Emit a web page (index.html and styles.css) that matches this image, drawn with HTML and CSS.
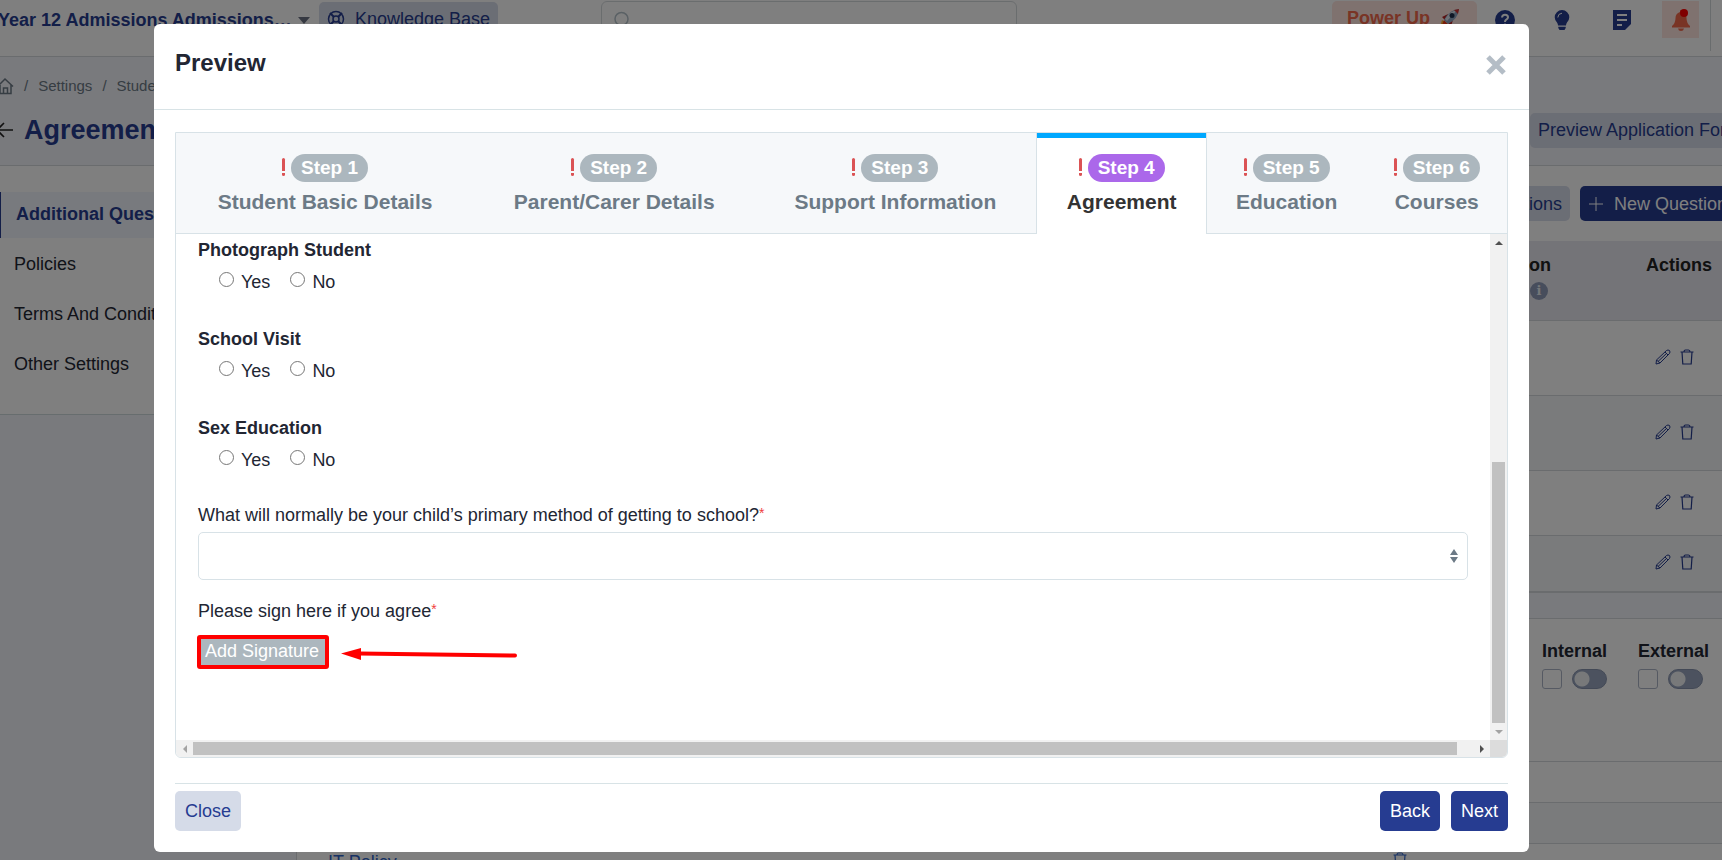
FILE: index.html
```html
<!DOCTYPE html>
<html lang="en">
<head>
<meta charset="utf-8">
<title>Preview</title>
<link rel="stylesheet" href="styles.css">
</head>
<body>
<svg class="defs" aria-hidden="true">
  <symbol id="pencil" viewBox="0 0 16 16"><path d="M1 15 L1.500 11 L11.500 1.500 Q13 0.500 14.500 1.500 Q15.500 3 14.500 4.500 L5 14 Z M10 3 L13 6 M1.500 11 L5 14 M3 12.500 L12 4" fill="none" stroke="currentColor" stroke-width="1"/></symbol>
  <symbol id="trash" viewBox="0 0 14 16"><path d="M0.500 3 H13.500 M4 3 Q4 1 5.500 1 H8.500 Q10 1 10 3 M2 3 L2.800 15 H11.200 L12 3" fill="none" stroke="currentColor" stroke-width="1.200"/></symbol>
</svg>

<div class="page">
  <header class="topbar">
    <button class="school">Year 12 Admissions Admissions… <span class="caret"></span></button>
    <button class="kb">
      <svg width="18" height="18" viewBox="0 0 18 18" fill="none" stroke="currentColor" stroke-width="1.500"><circle cx="9" cy="9" r="7.500"/><circle cx="9" cy="9" r="3"/><path d="M3 3l4 4M15 3l-4 4M3 15l4-4M15 15l-4-4" stroke-width="2"/></svg>
      Knowledge Base
    </button>
    <div class="search">
      <svg width="16" height="16" viewBox="0 0 16 16" fill="none" stroke="currentColor" stroke-width="1.500"><circle cx="7.500" cy="8" r="6.500"/><path d="M12 13l3 3"/></svg>
      <input type="search" aria-label="Search">
    </div>
    <div class="tools">
      <button class="power">Power Up
        <svg width="20" height="20" viewBox="0 0 20 20"><path d="M0 19L2 12L8 16Z" fill="#ffb02e"/><path d="M2 17L4 12L8 16Z" fill="#f03a17"/><path d="M8 6L2 9L5 12ZM13 12L11 18L8 15Z" fill="#b52222"/><path d="M4 12Q9 2 19 1Q18 11 8 16Z" fill="#8fa6c2"/><path d="M5 11Q10 3 17 2L7 13Z" fill="#dde5ef"/><path d="M14 2L19 1L18 6Z" fill="#d03030"/><circle cx="12" cy="7.500" r="2.500" fill="#1c2f4d"/></svg>
      </button>
      <button class="tool" aria-label="Help"><svg width="20" height="20" viewBox="0 0 20 20"><circle cx="10" cy="10" r="10" fill="currentColor"/><path d="M7 7.500Q7.300 4.800 10 4.800Q13 4.800 13 7.300Q13 8.800 11.300 9.700Q10 10.400 10 12" fill="none" stroke="#fff" stroke-width="2"/><circle cx="10" cy="14.800" r="1.300" fill="#fff"/></svg></button>
      <button class="tool" aria-label="Ideas"><svg width="16" height="20" viewBox="0 0 16 20"><path d="M8 0A7.300 7.300 0 0 1 15.300 7.300Q15.300 10 13 12.500Q12 14 12 15.500H4Q4 14 3 12.500Q.7 10 .7 7.300A7.300 7.300 0 0 1 8 0ZM4.300 16.700H11.700V18L10.500 20H5.500L4.300 18Z" fill="currentColor"/><path d="M3.800 7.500Q4 3.500 8 3.200" fill="none" stroke="#fff" stroke-width="1"/></svg></button>
      <button class="tool notes" aria-label="Notes"><svg width="18" height="20" viewBox="0 0 18 20"><path d="M0 0H18V14L12 20H0Z" fill="currentColor"/><path d="M4 5H14M4 10H14M4 15H9" stroke="#fff" stroke-width="2"/></svg></button>
      <button class="bell" aria-label="Notifications"><svg width="20" height="22" viewBox="0 0 20 22"><path d="M9 1.500Q10 .5 11 1.500V3Q15.500 4.500 15.500 9Q15.500 14 19 17V18.500H1V17Q4.500 14 4.500 9Q4.500 4.500 9 3ZM7 19.500H13Q12.500 22 10 22Q7.500 22 7 19.500Z" fill="#f2684b"/><circle cx="13" cy="4" r="4" fill="#f00"/></svg></button>
    </div>
  </header>

  <div class="subhead">
    <nav class="crumbs" aria-label="Breadcrumb">
      <svg width="16" height="18" viewBox="0 0 16 18" fill="none" stroke="currentColor" stroke-width="1.500"><path d="M0 9L7 2L15 9.500M2 8V16.500H13V8M5.500 16V11H9.500V16"/></svg>
      <span>/</span><a href="#">Settings</a><span>/</span><a href="#">Student</a>
    </nav>
    <div class="titlebar">
      <svg width="18" height="16" viewBox="0 0 18 16" fill="none" stroke="#222" stroke-width="1.600"><path d="M17 8H1M8 1L1 8L8 15"/></svg>
      <h1>Agreement</h1>
      <button class="soft preview">Preview Application Form</button>
    </div>
  </div>

  <div class="columns">
    <div class="side">
      <nav class="sidebar">
        <a class="current" href="#">Additional Questions</a>
        <a href="#">Policies</a>
        <a href="#">Terms And Conditions</a>
        <a href="#">Other Settings</a>
      </nav>
    </div>
    <main class="main">
      <div class="actions"><button class="soft">Questions</button><button class="new"><svg width="14" height="14" viewBox="0 0 14 14" stroke="currentColor"><path d="M7 0V14M0 7H14"/></svg>New Question</button></div>
      <table class="grid">
        <thead><tr><th class="cond">Condition<br><span class="info">i</span></th><th>Actions</th></tr></thead>
        <tbody>
          <tr class="tall"><td></td><td><div class="icons"><svg class="ic"><use href="#pencil"/></svg><svg class="ic bin"><use href="#trash"/></svg></div></td></tr>
          <tr class="tall"><td></td><td><div class="icons"><svg class="ic"><use href="#pencil"/></svg><svg class="ic bin"><use href="#trash"/></svg></div></td></tr>
          <tr class="mid"><td></td><td><div class="icons"><svg class="ic"><use href="#pencil"/></svg><svg class="ic bin"><use href="#trash"/></svg></div></td></tr>
          <tr class="low"><td></td><td><div class="icons"><svg class="ic"><use href="#pencil"/></svg><svg class="ic bin"><use href="#trash"/></svg></div></td></tr>
        </tbody>
      </table>
      <div class="gap"></div>
      <div class="access">
        <div class="group"><b>Internal</b><div class="pair"><input type="checkbox" aria-label="Internal required"><input class="switch" type="checkbox" aria-label="Internal enabled"></div></div>
        <div class="group"><b>External</b><div class="pair"><input type="checkbox" aria-label="External required"><input class="switch" type="checkbox" aria-label="External enabled"></div></div>
      </div>
      <div class="strip"></div>
      <div class="strip shade"></div>
      <div class="policy"><a href="#">IT Policy</a><svg class="ic bin"><use href="#trash"/></svg></div>
    </main>
  </div>
</div>

<div class="overlay">
  <section class="modal" role="dialog" aria-label="Preview">
    <div class="modal-head">
      <h2>Preview</h2>
      <button class="x" aria-label="Dismiss"><svg width="20" height="20" viewBox="0 0 20 20" stroke="currentColor" stroke-width="5"><path d="M2 2L18 18M18 2L2 18"/></svg></button>
    </div>
    <div class="modal-body">
      <div class="wizard">
        <div class="tabs" role="tablist">
          <button class="tab t1" role="tab"><span class="step"><i></i><span class="badge">Step 1</span></span>Student Basic Details</button>
          <button class="tab t2" role="tab"><span class="step"><i></i><span class="badge">Step 2</span></span>Parent/Carer Details</button>
          <button class="tab t3" role="tab"><span class="step"><i></i><span class="badge">Step 3</span></span>Support Information</button>
          <button class="tab t4 active" role="tab" aria-selected="true"><span class="step"><i></i><span class="badge">Step 4</span></span>Agreement</button>
          <button class="tab t5" role="tab"><span class="step"><i></i><span class="badge">Step 5</span></span>Education</button>
          <button class="tab t6" role="tab"><span class="step"><i></i><span class="badge">Step 6</span></span>Courses</button>
        </div>
        <div class="pane">
          <form class="form">
            <fieldset><legend>Photograph Student</legend><div class="opts"><label><input type="radio" name="photo">Yes</label><label><input type="radio" name="photo">No</label></div></fieldset>
            <fieldset><legend>School Visit</legend><div class="opts"><label><input type="radio" name="visit">Yes</label><label><input type="radio" name="visit">No</label></div></fieldset>
            <fieldset><legend>Sex Education</legend><div class="opts"><label><input type="radio" name="sexed">Yes</label><label><input type="radio" name="sexed">No</label></div></fieldset>
            <label class="field" for="travel">What will normally be your child’s primary method of getting to school?<span class="req">*</span></label>
            <div class="selectbox">
              <select id="travel"><option></option></select>
              <svg width="8" height="14" viewBox="0 0 8 14" fill="#6c7a86"><path d="M4 0L8 6H0ZM4 14L8 8H0Z"/></svg>
            </div>
            <div class="field sign">Please sign here if you agree<span class="req">*</span></div>
            <div class="signrow">
              <button type="button" class="signature">Add Signature</button>
              <svg width="178" height="18" viewBox="0 0 178 18"><path d="M18 10.500L174 12.500" stroke="red" stroke-width="4" stroke-linecap="round"/><path d="M0 10.500L20 5V17Z" fill="red"/></svg>
            </div>
          </form>
          <div class="vbar"><span class="arr up"></span><span class="vspace"></span><span class="vthumb"></span><span class="arr down"></span></div>
          <div class="hbar"><span class="arr left"></span><span class="hthumb"></span><span class="hspace"></span><span class="arr right"></span></div>
          <div class="corner"></div>
        </div>
      </div>
      <div class="modal-foot">
        <button class="btn light">Close</button>
        <button class="btn push">Back</button>
        <button class="btn">Next</button>
      </div>
    </div>
  </section>
</div>
</body>
</html>
```

FILE: styles.css
```css
* { box-sizing: border-box; }
body { margin: 0; font: 18px/24px "Liberation Sans", Arial, sans-serif; color: #222633; overflow: hidden; }
button, input, select { font: inherit; color: inherit; margin: 0; }
button { border: 0; background: none; padding: 0; white-space: nowrap; }
a { color: inherit; text-decoration: none; }
svg { display: block; flex: none; }
.defs { position: absolute; width: 0; height: 0; }

.page { height: 100vh; overflow: hidden; background: #f3f4fa; display: flex; flex-direction: column; }
.topbar { height: 57px; flex: none; background: #fff; border-bottom: 1px solid #d5d9dd; display: flex; align-items: flex-start; color: #263c91; }
.school { font-weight: bold; display: flex; align-items: center; width: 309px; height: 40px; margin-left: -2px; gap: 6px; }
.caret { border: 6px solid transparent; border-top: 7px solid #6d7385; border-bottom: 0; }
.kb { display: flex; align-items: center; gap: 10px; height: 34px; width: 179px; margin-left: 12px; margin-top: 2px; padding-left: 8px; background: #d7dcea; border-radius: 5px; }
.search { display: flex; align-items: center; flex: 0 1 416px; height: 36px; margin: 1px 0 0 103px; padding: 0 12px; border: 1px solid #d5dadd; border-radius: 6px; color: #b5c2ca; }
.search input { border: 0; background: none; width: 100%; outline: 0; }
.tools { display: flex; flex: none; margin-left: auto; padding-right: 11px; border-right: 1px solid #d2d8da; height: 51px; margin-right: 11px; }
.power { display: flex; align-items: center; gap: 10px; width: 145px; height: 34px; margin-top: 1px; margin-right: 18px; padding-left: 15px; background: #ffe4de; color: #f2684b; font-weight: bold; border-radius: 5px; }
.tool { width: 59px; height: 40px; display: grid; justify-items: start; align-content: center; }
.notes { width: 49px; }
.bell { width: 37px; height: 37px; margin-top: 1px; background: #ffe4de; display: grid; place-items: center; }

.subhead { height: 109px; flex: none; border-bottom: 1px solid #d5d9dd; padding-top: 17px; }
.crumbs { display: flex; align-items: center; gap: 10px; font-size: 15px; color: #6c7a86; margin-left: -2px; }
.titlebar { display: flex; align-items: center; margin-top: 14px; height: 36px; margin-left: -4px; }
.titlebar h1 { margin: 0 0 0 10px; font-size: 27px; color: #263c91; }
.soft { background: #d7dcea; color: #263c91; border-radius: 5px; height: 35px; padding: 0 8px; }
.preview { margin-left: auto; width: 216px; margin-right: -24px; flex: none; text-align: left; }

.columns { flex: 1; display: flex; min-height: 0; }
.side { width: 296px; flex: none; }
.sidebar { background: #fff; height: 249px; padding-top: 26px; border-bottom: 1px solid #cfdadd; }
.sidebar a { display: block; height: 50px; padding: 14px; }
.sidebar .current { height: 46px; padding: 10px 15px; background: #f0f5fc; border-left: 1px solid #263c91; color: #263c91; font-weight: bold; }
.main { flex: 1; min-width: 0; background: #fff; border-left: 1px solid #d5d9dd; }
.actions { display: flex; justify-content: flex-end; gap: 10px; height: 75px; padding-top: 20px; margin-right: -18px; }
.new { height: 35px; background: #263c91; color: #fff; border-radius: 5px; width: 160px; display: flex; align-items: center; gap: 11px; padding-left: 9px; }
.grid { width: 100%; border-collapse: collapse; color: #222; }
.grid th { height: 79px; background: #e8e9f1; text-align: left; vertical-align: top; padding: 12px 0; border-bottom: 1px solid #d5d9dd; width: 76px; }
.grid th.cond { width: auto; text-align: right; padding-right: 95px; }
.info { display: inline-block; width: 18px; height: 18px; margin: 2px 3px; border-radius: 9px; background: #8f9bb8; color: #e8ecf2; font: bold 13px/17px "DejaVu Serif", serif; text-align: center; }
.grid td { border-bottom: 1px solid #d5d9dd; padding: 0 0 2px; color: #263c91; }
.icons { display: flex; padding-left: 9px; gap: 9px; }
.tall { height: 75px; }
.mid { height: 65px; }
.low { height: 56px; }
.grid tr:nth-child(even) td { background: #f4f6f9; }
.ic { width: 16px; height: 16px; }
.bin { width: 14px; }
.gap { height: 27px; background: #f3f4fa; border-top: 1px solid #d5d9dd; border-bottom: 1px solid #d5d9dd; }
.access { height: 143px; border-bottom: 1px solid #d5d9dd; padding-top: 20px; display: flex; justify-content: flex-end; margin-right: -12px; }
.group { width: 96px; }
.group b { display: block; margin-bottom: 6px; }
.pair { display: flex; gap: 10px; }
.pair input { appearance: none; width: 20px; height: 20px; border: 1px solid #adb5c6; border-radius: 3px; }
.pair .switch { width: 35px; border-radius: 10px; background: radial-gradient(circle at 9px 9px, #f1f3f5 7px, #98a5be 8px); border-color: #8793ad; }
.strip { height: 41px; border-bottom: 1px solid #d5d9dd; }
.shade { background: #f4f6f9; }
.policy { display: flex; justify-content: space-between; padding: 6px 315px 0 31px; color: #3064c8; }
.policy .ic { margin-top: 2px; }

.overlay { position: fixed; inset: 0; background: rgba(0,0,0,.5); padding: 24px 193px 8px 154px; display: flex; }
.modal { flex: 1; min-width: 0; background: #fff; border-radius: 6px; display: flex; flex-direction: column; }
.modal-head { height: 86px; flex: none; border-bottom: 1px solid #d8e3e6; display: flex; justify-content: space-between; padding: 26px 23px 0 21px; }
.modal-head h2 { margin: 0; font-size: 24px; line-height: 26px; }
.x { color: #b4bdc6; height: 30px; }
.modal-body { flex: 1; min-height: 0; display: flex; flex-direction: column; padding: 22px 21px 21px; }
.wizard { flex: 1; min-height: 0; border: 1px solid #d8e2e7; border-radius: 0 0 6px 6px; display: flex; flex-direction: column; overflow: hidden; }
.tabs { display: flex; height: 101px; flex: none; background: #f6f8fa; }
.tab { flex: 1 1 0; font-size: 21px; font-weight: bold; color: #6c7a86; border-bottom: 1px solid #d8e2e7; padding-top: 2px; }
.t1 { flex-grow: 299; }
.t2 { flex-grow: 281; }
.t3 { flex-grow: 283; }
.t4 { flex-grow: 169; }
.t5 { flex-grow: 160; }
.t6 { flex-grow: 141; }
.tab.active { background: #fff; color: #333; border: solid #d8e2e7; border-width: 0 1px; padding-bottom: 1px; box-shadow: inset 0 5px #00a8ff; }
.step { display: flex; justify-content: center; gap: 6px; margin-bottom: 8px; }
.step i { width: 3px; height: 18px; margin-top: 4px; border-radius: 2px; background: linear-gradient(#db5355 13px, transparent 13px, transparent 15px, #db5355 15px); }
.badge { height: 28px; padding: 0 10px; border-radius: 14px; background: #acb7be; color: #fff; font-size: 19px; line-height: 27px; }
.active .badge { background: #ab68ea; }

.pane { flex: 1; min-height: 0; display: grid; grid-template: minmax(0, 1fr) 17px / minmax(0, 1fr) 17px; }
.form { padding: 4px 22px 0; overflow: hidden; }
fieldset { border: 0; margin: 0; padding: 0; height: 89px; }
legend { font-weight: bold; padding: 0; }
.opts { display: flex; gap: 20px; padding: 8px 0 0 21px; }
.opts label { display: flex; gap: 7px; }
.opts input { width: 15px; height: 15px; margin-top: 2px; }
.field { display: block; margin-bottom: 5px; }
fieldset + .field { margin-top: -2px; }
.req { color: #f03e3e; font-size: 14px; vertical-align: 3px; line-height: 1; }
.selectbox { display: grid; align-items: center; justify-items: end; }
.selectbox > * { grid-area: 1 / 1; }
.selectbox select { appearance: none; width: 100%; height: 48px; border: 1px solid #d8e2e7; border-radius: 5px; background: #fff; }
.selectbox svg { margin-right: 10px; }
.sign { margin-top: 19px; margin-bottom: 12px; }
.signrow { display: flex; align-items: center; gap: 12px; }
.signature { height: 34px; width: 132px; margin-left: -1px; background: #acb7be; color: #fff; border: 4px solid red; border-radius: 3px; line-height: 20px; padding: 0 2px 3px 0; }
.arr { width: 17px; height: 17px; flex: none; display: grid; place-items: center; }
.arr::before { content: ""; border: 4px solid transparent; }
.up::before { border-bottom-color: #505050; border-top: 0; }
.down::before { border-top-color: #a3a3a3; border-bottom: 0; }
.left::before { border-right-color: #a3a3a3; border-left: 0; }
.right::before { border-left-color: #505050; border-right: 0; }
.vbar, .hbar { display: flex; background: #f1f1f1; }
.vbar { flex-direction: column; align-items: center; }
.hbar { align-items: center; }
.vspace { flex: 211; }
.vthumb { flex: 261; width: 13px; background: #c1c1c1; }
.hthumb { flex: 1264; height: 13px; background: #c1c1c1; }
.hspace { flex: 16; }
.corner { background: #dcdcdc; }
.modal-foot { margin-top: 25px; border-top: 1px solid #d8e3e6; padding-top: 7px; display: flex; gap: 11px; }
.btn { height: 40px; padding: 0 10px; background: #263c91; color: #fff; border-radius: 5px; }
.light { background: #d5dbe8; color: #263c91; }
.push { margin-left: auto; }
```
